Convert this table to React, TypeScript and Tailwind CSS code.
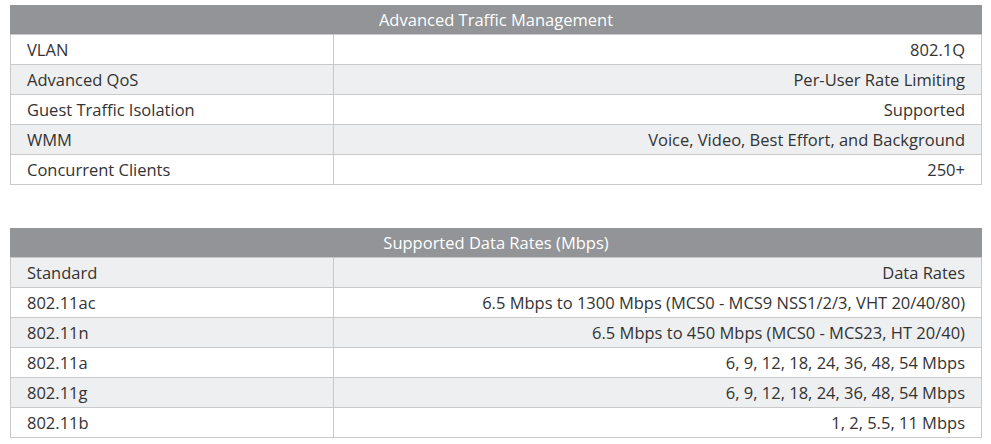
type Row = { label: string; value: string; shade?: boolean }

const traffic: Row[] = [
  { label: 'VLAN', value: '802.1Q' },
  { label: 'Advanced QoS', value: 'Per-User Rate Limiting', shade: true },
  { label: 'Guest Traffic Isolation', value: 'Supported' },
  { label: 'WMM', value: 'Voice, Video, Best Effort, and Background', shade: true },
  { label: 'Concurrent Clients', value: '250+' },
]

const rates: Row[] = [
  { label: 'Standard', value: 'Data Rates', shade: true },
  { label: '802.11ac', value: '6.5 Mbps to 1300 Mbps (MCS0 - MCS9 NSS1/2/3, VHT 20/40/80)' },
  { label: '802.11n', value: '6.5 Mbps to 450 Mbps (MCS0 - MCS23, HT 20/40)', shade: true },
  { label: '802.11a', value: '6, 9, 12, 18, 24, 36, 48, 54 Mbps' },
  { label: '802.11g', value: '6, 9, 12, 18, 24, 36, 48, 54 Mbps', shade: true },
  { label: '802.11b', value: '1, 2, 5.5, 11 Mbps' },
]

function SpecTable({ title, rows }: { title: string; rows: Row[] }) {
  return (
    <div className="w-[972px] border-b border-[#c9c9c9]">
      <div className="h-[29px] bg-[#929497] text-white text-center leading-[29px]">{title}</div>
      {rows.map((r) => (
        <div
          key={r.label}
          className={`flex h-[30px] border-t border-x border-[#c9c9c9] first-of-type:border-t-0 ${r.shade ? 'bg-[#eeeff0]' : 'bg-white'}`}
        >
          <div className="w-[323px] pl-[16px] leading-[29px] border-r border-[#c9c9c9]">{r.label}</div>
          <div className="flex-1 pr-[16px] text-right leading-[29px]">{r.value}</div>
        </div>
      ))}
    </div>
  )
}

export default function App() {
  return (
    <div
      className="w-[991px] h-[444px] bg-white pt-[5px] pl-[10px] text-[16.5px] text-[#333333]"
      style={{ fontFamily: '"Open Sans", sans-serif' }}
    >
      <SpecTable title="Advanced Traffic Management" rows={traffic} />
      <div className="h-[43px]" />
      <SpecTable title="Supported Data Rates (Mbps)" rows={rates} />
    </div>
  )
}
